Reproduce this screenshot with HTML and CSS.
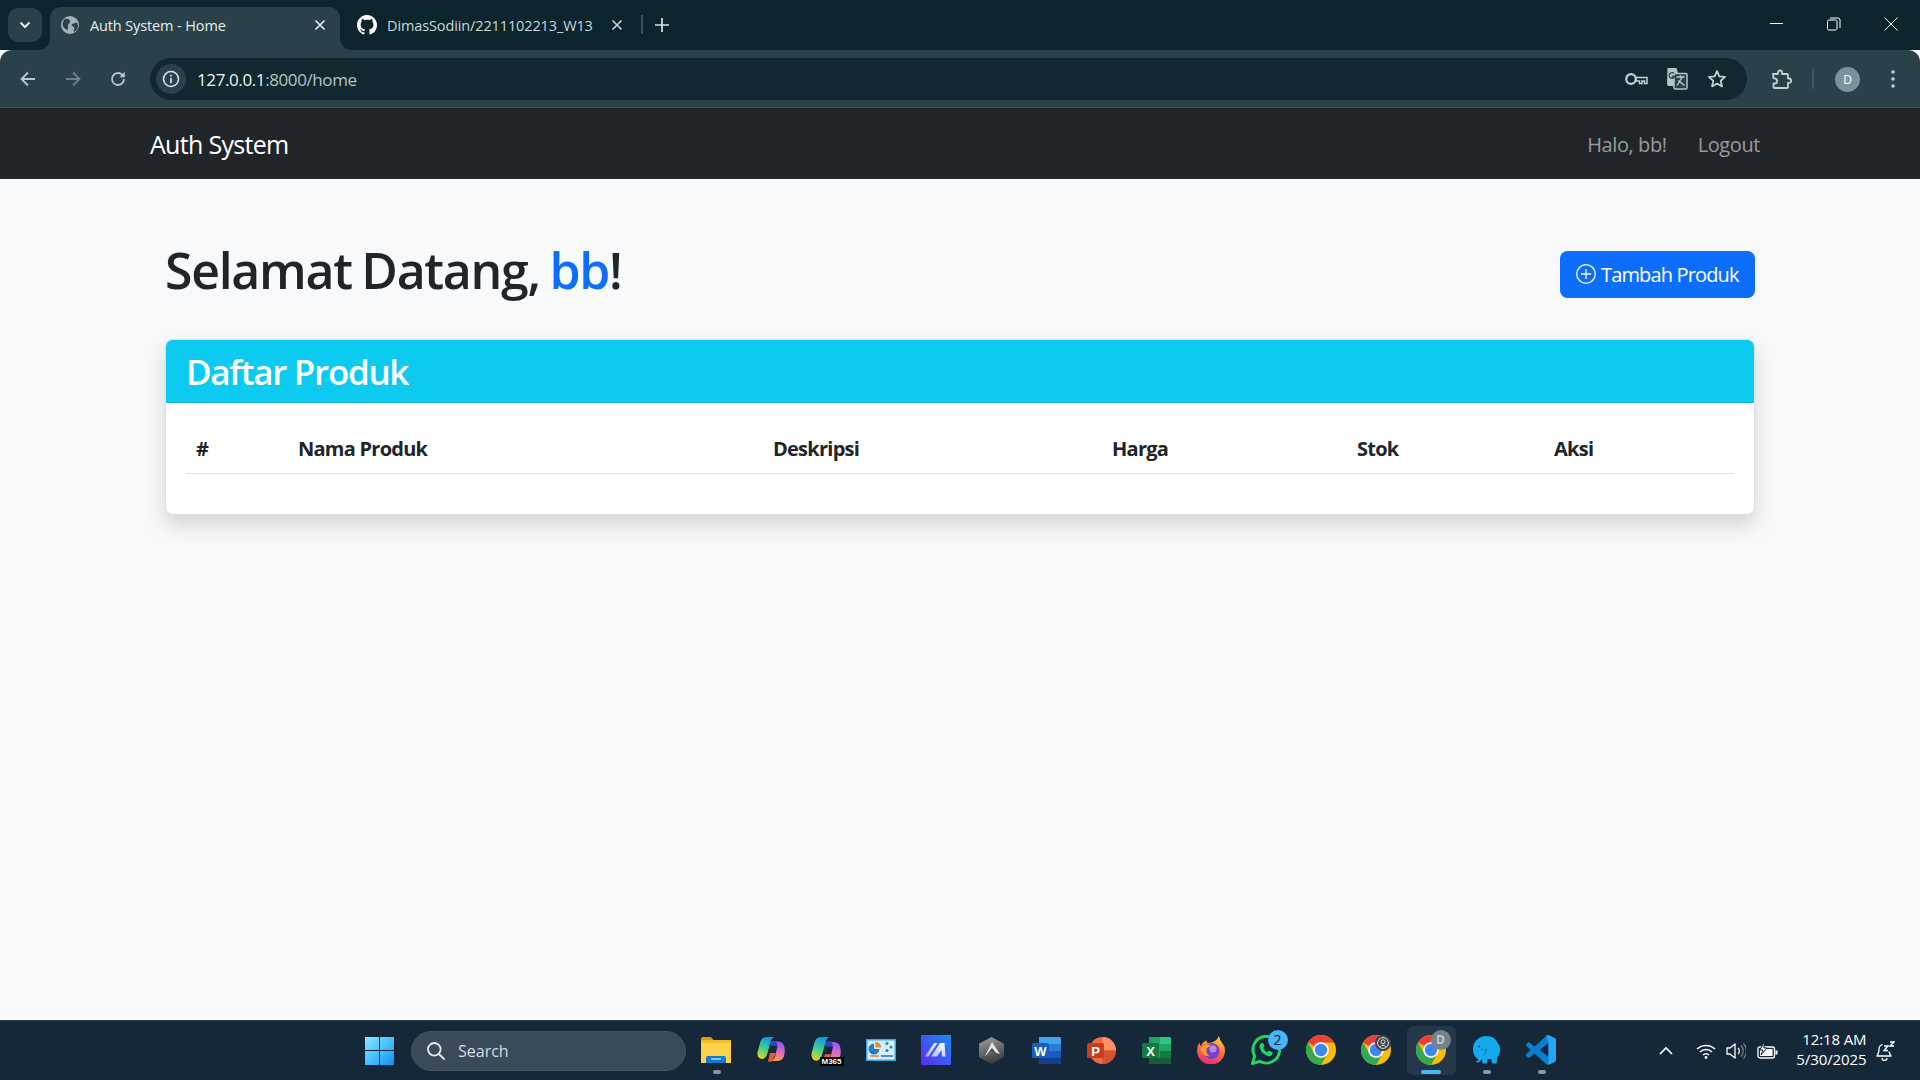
FILE: index.html
```html
<!DOCTYPE html>
<html lang="en">
<head>
<meta charset="utf-8">
<title>Auth System - Home</title>
<link rel="stylesheet" href="styles.css">
</head>
<body>
<header class="tabstrip">
  <div class="tab-search"><svg width="12" height="8" viewBox="0 0 12 8"><path d="M1.500 1.500 6 6l4.500-4.500" fill="none" stroke="#e4edef" stroke-width="2"/></svg></div>
  <div class="tab tab-active">
    <svg class="fav" width="18" height="18" viewBox="0 0 18 18"><circle cx="9" cy="9" r="9" fill="#a5b0b5"/><path d="M3 3.500q3-1.500 5 0 2 2 0 4-2 1.500-1 3.500.5 2-1 3-3.500-2-4.500-5 .5-3.500 1.500-5.500zM16 6.500q1.500 3 .5 6-2 3-3.500 3.500-1-2 .5-3.500l-1-2q-2.500-.5-1.500-2.500 2-1 5-1.500z" fill="#2a414a"/></svg>
    <span class="tab-title">Auth System - Home</span>
    <svg class="tab-x" width="12" height="12" viewBox="0 0 12 12"><path d="M1.500 1.500l9 9m0-9l-9 9" stroke="#e6eef0" stroke-width="1.600"/></svg>
  </div>
  <div class="tab tab-idle">
    <svg class="fav" width="20" height="20" viewBox="0 0 16 16"><path fill="#fff" d="M8 0C3.58 0 0 3.58 0 8c0 3.54 2.29 6.53 5.47 7.59.4.07.55-.17.55-.38 0-.19-.01-.82-.01-1.490-2.010.37-2.530-.49-2.690-.94-.09-.23-.48-.94-.82-1.130-.28-.15-.68-.52-.01-.53.63-.01 1.080.58 1.230.82.72 1.210 1.870.87 2.330.66.07-.52.28-.87.51-1.070-1.780-.2-3.640-.89-3.640-3.950 0-.87.31-1.590.82-2.150-.08-.2-.36-1.020.08-2.120 0 0 .67-.21 2.200.82.64-.18 1.320-.27 2-.27s1.360.09 2 .27c1.530-1.040 2.200-.82 2.200-.82.44 1.100.16 1.920.08 2.120.51.56.82 1.270.82 2.150 0 3.070-1.870 3.750-3.650 3.950.29.25.54.73.54 1.480 0 1.070-.01 1.930-.01 2.200 0 .21.15.46.55.38A8.010 8.010 0 0 0 16 8c0-4.420-3.580-8-8-8z"/></svg>
    <span class="tab-title tab-title-idle">DimasSodiin/2211102213_W13</span>
    <svg class="tab-x" width="12" height="12" viewBox="0 0 12 12"><path d="M1.500 1.500l9 9m0-9l-9 9" stroke="#c9d6da" stroke-width="1.600"/></svg>
  </div>
  <span class="tab-divider"></span>
  <svg class="tab-plus" width="14" height="14" viewBox="0 0 14 14"><path d="M7 0v14M0 7h14" stroke="#d5e2e6" stroke-width="1.700"/></svg>
  <div class="window-controls">
    <svg width="14" height="14" viewBox="0 0 14 14"><path d="M0 6.500h13" stroke="#fff" stroke-width="1"/></svg>
    <svg width="14" height="14" viewBox="0 0 14 14"><rect x=".5" y="3" width="9.500" height="10" rx="1.500" fill="none" stroke="#fff"/><path d="M3 1h8a2 2 0 0 1 2 2v8" fill="none" stroke="#fff"/></svg>
    <svg width="14" height="14" viewBox="0 0 14 14"><path d="M.5.5l13 13m0-13l-13 13" stroke="#fff"/></svg>
  </div>
</header>

<div class="toolbar">
  <div class="tool-btn"><svg width="18" height="18" viewBox="0 0 18 18"><path d="M16 9H3m6-6.500L2.500 9 9 15.500" fill="none" stroke="#b8c9ce" stroke-width="1.800"/></svg></div>
  <div class="tool-btn"><svg width="18" height="18" viewBox="0 0 18 18"><path d="M2 9h13M9 2.500 15.500 9 9 15.500" fill="none" stroke="#6f8087" stroke-width="1.800"/></svg></div>
  <div class="tool-btn"><svg width="18" height="18" viewBox="0 0 18 18"><path d="M15 9a6 6 0 1 1-1.800-4.300L15 6.500" fill="none" stroke="#b8c9ce" stroke-width="1.800"/><path d="M15.800 1.800v5.400h-5.400z" fill="#b8c9ce"/></svg></div>
  <div class="omnibox">
    <div class="site-info"><svg width="18" height="18" viewBox="0 0 18 18"><circle cx="9" cy="9" r="7.500" fill="none" stroke="#dbe5e8" stroke-width="1.600"/><path d="M9 8v5.200M9 4.800v1.800" stroke="#dbe5e8" stroke-width="1.700"/></svg></div>
    <span class="url">127.0.0.1<span class="url-dim">:8000/home</span></span>
    <div class="omni-icons">
      <svg class="omni-key" width="23" height="14" viewBox="0 0 23 14"><circle cx="6" cy="7" r="4.800" fill="none" stroke="#c3d0d4" stroke-width="2.200"/><path d="M11 5.500h11v6h-2.500V9H17v2.500h-2.500V9H11z" fill="none" stroke="#c3d0d4" stroke-width="1.500"/></svg>
      <svg width="22" height="22" viewBox="0 0 22 22"><path d="M1.500 0h9L16 18H3a2 2 0 0 1-2-2z" fill="#b6c3c8"/><rect x="8" y="5.500" width="13" height="15.500" rx="1.200" fill="#2a414a" stroke="#b6c3c8" stroke-width="1.500"/><path d="M10.500 9h8M14.500 7.500V9m-3.500 8.500 5-8m-3.500 3 6 5" stroke="#c3d0d4" stroke-width="1.300" fill="none"/><path d="M8 5.500a2.800 2.800 0 1 0 .6 3H5.800" fill="none" stroke="#2a414a" stroke-width="1.300"/></svg>
      <svg width="20" height="20" viewBox="0 0 20 20"><path d="M10 2l2.300 5.400 5.800.5-4.400 3.800 1.300 5.700L10 14.400l-5 3 1.300-5.700L1.900 7.900l5.800-.5z" fill="none" stroke="#c3d0d4" stroke-width="1.800" stroke-linejoin="round"/></svg>
    </div>
  </div>
  <div class="tool-ext"><svg width="21" height="21" viewBox="0 0 21 21"><path d="M2 5h5V3.500a2 2 0 0 1 4 0V5h5a1 1 0 0 1 1 1v3.500h1a2.200 2.200 0 0 1 0 4.400h-1V18a1 1 0 0 1-1 1H3.500a1 1 0 0 1-1-1v-3.500h1a2.600 2.600 0 0 0 0-5.200h-1z" fill="none" stroke="#c3d0d4" stroke-width="1.800" stroke-linejoin="round"/></svg></div>
  <span class="tool-divider"></span>
  <div class="avatar">D</div>
  <svg class="tool-menu" width="4" height="18" viewBox="0 0 4 18"><circle cx="2" cy="2" r="1.800" fill="#c3d0d4"/><circle cx="2" cy="9" r="1.800" fill="#c3d0d4"/><circle cx="2" cy="16" r="1.800" fill="#c3d0d4"/></svg>
</div>

<nav class="navbar">
  <a class="brand">Auth System</a>
  <div class="nav-links"><a>Halo, bb!</a><a>Logout</a></div>
</nav>

<main class="page">
  <div class="head-row">
    <h1>Selamat Datang, <span class="accent">bb</span>!</h1>
    <a class="btn-add"><svg width="20" height="20" viewBox="0 0 20 20"><circle cx="10" cy="10" r="9.300" fill="none" stroke="#fff" stroke-width="1.300"/><path d="M10 5v10M5 10h10" stroke="#fff" stroke-width="1.300"/></svg>Tambah Produk</a>
  </div>
  <section class="card">
    <div class="card-header"><h3>Daftar Produk</h3></div>
    <div class="card-body">
      <table>
        <thead>
          <tr>
            <th class="c-no">#</th>
            <th class="c-name">Nama Produk</th>
            <th class="c-desc">Deskripsi</th>
            <th class="c-price">Harga</th>
            <th class="c-stock">Stok</th>
            <th class="c-act">Aksi</th>
          </tr>
        </thead>
        <tbody></tbody>
      </table>
    </div>
  </section>
</main>

<footer class="taskbar">
  <div class="tb-item"><svg width="29" height="29" viewBox="0 0 29 29"><defs><linearGradient id="win" x1="0" y1="0" x2="1" y2="1"><stop offset="0" stop-color="#86ecff"/><stop offset="1" stop-color="#0c94f4"/></linearGradient></defs><path fill="url(#win)" d="M0 1h14v13H0zM15 1h14v13H15zM0 15h14v14H0zM15 15h14v14H15z"/></svg></div>
  <div class="tb-search"><svg width="20" height="20" viewBox="0 0 20 20"><circle cx="8.300" cy="8.300" r="6.300" fill="none" stroke="#e4e9ed" stroke-width="1.800"/><path d="M13 13l5.500 5.500" stroke="#e4e9ed" stroke-width="1.800"/></svg><span>Search</span></div>
  <div class="tb-item"><svg width="30" height="26" viewBox="0 0 30 26"><path d="M0 2a2 2 0 0 1 2-2h8l3 3.500H0z" fill="#d99a06"/><path d="M0 3h30v23H0z" fill="#fcd34a"/><path d="M0 3h30v3H0z" fill="#f4bd2c"/><path d="M5 26v-5a2 2 0 0 1 2-2h16a2 2 0 0 1 2 2v5z" fill="#0f78d4"/><path d="M10 22h10" stroke="#a9dcfb" stroke-width="1.500"/></svg><span class="dot"></span></div>
  <div class="tb-item"><svg width="28" height="26" viewBox="0 0 28 26"><use href="#copilot"/></svg></div>
  <div class="tb-item"><svg width="30" height="27" viewBox="0 0 28 25"><use href="#copilot"/></svg><span class="m365">M365</span></div>
  <div class="tb-item"><svg width="30" height="22" viewBox="0 0 30 22"><rect width="30" height="22" fill="#3ea6de"/><rect x="1.500" y="1.500" width="27" height="19" fill="#d4eefb"/><path d="M8 4.500a5.500 5.500 0 1 0 5.500 5.500H8z" fill="#2b79c2"/><path d="M9.500 2.800v5.700h5.700a5.700 5.700 0 0 0-5.700-5.700z" fill="#e78a2c"/><circle cx="21" cy="4.500" r="1.500" fill="#2b79c2"/><circle cx="25" cy="8" r="1.500" fill="#2b79c2"/><circle cx="21" cy="11.500" r="1.500" fill="#2b79c2"/><path d="M4 17h9" stroke="#e78a2c" stroke-width="1.600"/><path d="M15 17h12" stroke="#2b79c2" stroke-width="1.600"/></svg></div>
  <div class="tb-item"><svg width="30" height="30" viewBox="0 0 30 30"><defs><linearGradient id="mm" x1="1" y1="0" x2="0" y2="1"><stop offset="0" stop-color="#1a8cf5"/><stop offset="1" stop-color="#5a2cf0"/></linearGradient><linearGradient id="mmw" x1="0" y1="1" x2="1" y2="0"><stop offset="0" stop-color="#9fb0ff"/><stop offset="1" stop-color="#fff"/></linearGradient></defs><rect width="30" height="30" fill="url(#mm)"/><path d="M4 21.500 13 8h3.500L7.500 21.500zM10 21.500 19 8h4.500l1 13.500h-3.500L20.500 15 16 21.500z" fill="url(#mmw)"/></svg></div>
  <div class="tb-item"><svg width="25" height="27" viewBox="0 0 25 27"><defs><linearGradient id="hx" x1="0" y1="0" x2=".3" y2="1"><stop offset="0" stop-color="#a0a2a6"/><stop offset="1" stop-color="#3c3e42"/></linearGradient></defs><path d="M12.500 0 25 6.800v13.400L12.500 27 0 20.200V6.800z" fill="url(#hx)"/><path d="M13 5l8 12-9-3-6 5z" fill="#e2e3e5"/><path d="M13 11l4 5-5-1.800-4 2.800z" fill="#44464a"/></svg></div>
  <div class="tb-item"><svg width="29" height="27" viewBox="0 0 29 27"><path d="M7 0h20a2 2 0 0 1 2 2v23a2 2 0 0 1-2 2H9a2 2 0 0 1-2-2z" fill="#2b7cd3"/><path d="M7 0h20a2 2 0 0 1 2 2v5H7z" fill="#41a5ee"/><path d="M7 14h22v6.500H7z" fill="#185abd"/><path d="M7 20.500h22V25a2 2 0 0 1-2 2H9a2 2 0 0 1-2-2z" fill="#103f91"/><rect y="6" width="17" height="15" rx="1.500" fill="#1a5dc0"/><text x="8.500" y="18.500" class="ic-letter" text-anchor="middle">W</text></svg></div>
  <div class="tb-item"><svg width="29" height="27" viewBox="0 0 29 27"><circle cx="15.500" cy="13.500" r="13.500" fill="#ed6c47"/><path d="M15.500 0A13.500 13.500 0 0 1 29 13.500H15.500z" fill="#ff8f6b"/><path d="M15.500 13.500H29A13.500 13.500 0 0 1 15.500 27z" fill="#d35230"/><rect y="6" width="17" height="15" rx="1.500" fill="#c43e1c"/><text x="8.500" y="18.500" class="ic-letter" text-anchor="middle">P</text></svg></div>
  <div class="tb-item"><svg width="29" height="27" viewBox="0 0 29 27"><path d="M7 0h20a2 2 0 0 1 2 2v23a2 2 0 0 1-2 2H9a2 2 0 0 1-2-2z" fill="#21a366"/><path d="M18 0h9a2 2 0 0 1 2 2v5H18z" fill="#33c481"/><path d="M18 14h11v6.500H18z" fill="#107c41"/><path d="M7 20.500h22V25a2 2 0 0 1-2 2H9a2 2 0 0 1-2-2z" fill="#185c37"/><rect y="6" width="17" height="15" rx="1.500" fill="#107c41"/><text x="8.500" y="18.500" class="ic-letter" text-anchor="middle">X</text></svg></div>
  <div class="tb-item"><svg width="28" height="28" viewBox="0 0 28 28"><defs><linearGradient id="ff" x1=".7" y1="0" x2=".4" y2="1"><stop offset="0" stop-color="#ffd43a"/><stop offset=".45" stop-color="#ff7b2e"/><stop offset="1" stop-color="#f0267a"/></linearGradient></defs><path d="M22 0q.5 4 3.500 7.500 2.500 3 2.500 7a14 14 0 0 1-28 0q0-5 2.500-8 0 2.500 1.500 3.500 1.500-4.500 6-5.500-1 2 1 2.500 8 0 11-7z" fill="url(#ff)"/><circle cx="14.500" cy="15" r="8" fill="#7d3fc4"/><circle cx="16" cy="13" r="3.500" fill="#b58be8"/><path d="M3.500 13q5-6 11-4l-5 3.500q-1 5 3.500 8-7.500 0-9.500-7.500z" fill="#ff9a2e"/></svg></div>
  <div class="tb-item"><svg width="30" height="30" viewBox="0 0 31 31"><path d="M1.500 29.500l2.300-7.500A13.800 13.800 0 1 1 9 27.200z" fill="none" stroke="#25d366" stroke-width="3" stroke-linejoin="round"/><path d="M10.500 8.500q-2.500 1.500-1.500 5 2 6.500 9 8.500 3 .5 4-2l.5-2-4-2-1.500 1.800q-3-1-4.500-4.500l1.500-1.800-1.500-3.500z" fill="#25d366"/></svg><span class="badge badge-count">2</span></div>
  <div class="tb-item"><svg width="30" height="30" viewBox="0 0 30 30"><use href="#chrome-mark"/></svg></div>
  <div class="tb-item"><svg width="30" height="30" viewBox="0 0 30 30"><use href="#chrome-mark"/></svg><span class="badge badge-person"><svg width="12" height="12" viewBox="0 0 12 12"><circle cx="6" cy="6" r="5.400" fill="none" stroke="#e3e3e3"/><circle cx="6" cy="4.800" r="2" fill="none" stroke="#e3e3e3"/><path d="M2.800 9.800q3.200-3.200 6.400 0" fill="none" stroke="#e3e3e3"/></svg></span></div>
  <div class="tb-item tb-active"><svg class="tb-icon" width="30" height="30" viewBox="0 0 30 30"><use href="#chrome-mark"/></svg><span class="badge badge-profile">D</span><span class="dot dot-active"></span></div>
  <div class="tb-item"><svg width="27" height="28" viewBox="0 0 27 28"><path d="M13.500 0C20 0 23 3 24.500 7c1.500 1 2.500 3.500 2.500 7 0 4-1.500 6-2.500 7-.5 2-.5 4.500-1 6.500h-4.500l-.5-4.500h-4l-.5 4.500H9.500L9 23c-1 .5-1.500 2-2.500 3-2 1-4 .5-4-1.500.5 1 2.500 1 3-.5C4 22 0 20 0 13 0 6 5.500 0 13.500 0z" fill="#14a9ea"/><path d="M8 13q3 2 6 .5-1 5-4 6" fill="none" stroke="#0b7fbf" stroke-width="1"/><circle cx="6" cy="10.500" r=".9" fill="#0a3f5f"/></svg><span class="dot"></span></div>
  <div class="tb-item"><svg width="30" height="30" viewBox="0 0 100 100"><path fill-rule="evenodd" d="M70.900 99.300a6 6 0 0 0 4.600-.1l20.600-9.900a6.200 6.200 0 0 0 3.500-5.600V16.300a6.200 6.200 0 0 0-3.500-5.600L75.500.8a6.200 6.200 0 0 0-7 1.200L29 38 11.800 25a4.200 4.200 0 0 0-5.300.2L1 30.300a4.200 4.200 0 0 0 0 6.200L15.900 50 1 63.600a4.200 4.200 0 0 0 0 6.200l5.500 5a4.200 4.200 0 0 0 5.300.2L29 62l39.500 36zM75 27.300 45 50l30 22.700z" fill="#0a7fd2"/><path d="M75 100V27.300L68.500 2q3-2.500 7-1.200l20.600 9.900a6.200 6.200 0 0 1 3.900 5.600v67a6.200 6.200 0 0 1-3.900 6l-20.600 9.900z" fill="#25a6f0"/></svg><span class="dot"></span></div>
  <div class="tray">
    <svg class="tray-chev" width="14" height="9" viewBox="0 0 14 9"><path d="M1 8l6-6 6 6" fill="none" stroke="#fff" stroke-width="1.700"/></svg>
    <svg class="tray-wifi" width="20" height="16" viewBox="0 0 20 16"><path d="M1 6a13 13 0 0 1 18 0M4 9a8.500 8.500 0 0 1 12 0M7 12a4 4 0 0 1 6 0" fill="none" stroke="#fff" stroke-width="1.500"/><circle cx="10" cy="14.500" r="1.400" fill="#fff"/></svg>
    <svg class="tray-vol" width="20" height="18" viewBox="0 0 20 18"><path d="M1 6h3l5-4v14l-5-4H1z" fill="none" stroke="#fff" stroke-width="1.300" stroke-linejoin="round"/><path d="M12 6a4 4 0 0 1 0 6" fill="none" stroke="#fff" stroke-width="1.200"/><path d="M15 3.500a8 8 0 0 1 0 11M17.500 1.500a11 11 0 0 1 0 15" fill="none" stroke="#7c8894" stroke-width="1.100"/></svg>
    <svg class="tray-bat" width="21" height="18" viewBox="0 0 21 18"><rect x="1" y="5" width="16.500" height="11" rx="2" fill="none" stroke="#fff" stroke-width="1.300"/><rect x="18.500" y="8.500" width="2" height="4" fill="#fff"/><rect x="3" y="7" width="12.500" height="7" fill="#fff"/><path d="M7 0 3 8h3l-2 5 6-7H7z" fill="#fff" stroke="#15293b"/></svg>
    <div class="clock"><span>12:18 AM</span><span>5/30/2025</span></div>
    <svg class="tray-bell" width="19" height="20" viewBox="0 0 19 20"><path d="M6.500 3.500A5 5 0 0 0 3 8.500c0 4-2 6-2 6.500h14c0-.5-1.500-2-2-4.500" fill="none" stroke="#fff" stroke-width="1.300"/><path d="M6 17a2.500 2.500 0 0 0 5 0" fill="none" stroke="#fff" stroke-width="1.300"/><path d="M8 5h4l-4 4.500h4M14 1h4l-4 4h4" fill="none" stroke="#fff" stroke-width="1.300"/></svg>
  </div>
</footer>

<svg class="sprite" width="0" height="0">
  <defs>
    <linearGradient id="cp1" x1=".5" y1="0" x2=".2" y2="1"><stop offset="0" stop-color="#1496e8"/><stop offset=".5" stop-color="#3fd08f"/><stop offset="1" stop-color="#f4d01d"/></linearGradient>
    <linearGradient id="cp2" x1=".6" y1="0" x2=".4" y2="1"><stop offset="0" stop-color="#8a5cf0"/><stop offset=".55" stop-color="#e56bc0"/><stop offset="1" stop-color="#fb9c4a"/></linearGradient>
    <linearGradient id="cp3" x1="0" y1="0" x2="1" y2="0"><stop offset="0" stop-color="#0b67d8"/><stop offset="1" stop-color="#3f2fc0"/></linearGradient>
    <g id="copilot">
      <path d="M10 4h9l3 5h-7z" fill="url(#cp3)"/>
      <path d="M13 16h6l-4 8q-3 2-4 0z" fill="#f0563a"/>
      <path d="M9.500 0h8q-3 1-4 5l-3 11q-1 5-5 6H4.500Q0 21 .5 15.500L3 6Q4.500 0 9.500 0z" fill="url(#cp1)"/>
      <path d="M18.500 4.500h3q5 0 6 6 .5 3 0 6.500-1 7-7 7h-7q4-1 5-6l2-9q0-3-2-4.500z" fill="url(#cp2)"/>
    </g>
    <g id="chrome-mark">
      <circle cx="15" cy="15" r="15" fill="#fbbc04"/>
      <path d="M15 0a15 15 0 0 1 13 7.500H15a7.500 7.500 0 0 0-6.500 3.750L2 7.500A15 15 0 0 1 15 0z" fill="#ea4335"/>
      <path d="M2 7.500l6.500 11.250A7.500 7.500 0 0 0 21.500 18.750L15 30A15 15 0 0 1 2 7.500z" fill="#34a853"/>
      <circle cx="15" cy="15" r="7.800" fill="#fff"/>
      <circle cx="15" cy="15" r="6.200" fill="#4285f4"/>
    </g>
  </defs>
</svg>
</body>
</html>
```
FILE: styles.css
```css
* { box-sizing: border-box; }
html, body { margin: 0; height: 100%; }
body {
  display: flex;
  flex-direction: column;
  height: 100vh;
  overflow: hidden;
  font-family: "Open Sans", "Noto Sans", sans-serif;
  background: #f8f9fa;
  color: #212529;
}
svg { display: block; flex: none; }
.sprite { position: absolute; }

/* Browser tab strip */
.tabstrip {
  display: flex;
  align-items: flex-end;
  height: 50px;
  padding-left: 8px;
  background: #0c252c;
  flex: none;
}
.tab-search {
  display: flex;
  align-items: center;
  justify-content: center;
  width: 34px;
  height: 34px;
  margin-bottom: 8px;
  border-radius: 10px;
  background: #2a414a;
}
.tab {
  position: relative;
  display: flex;
  align-items: center;
  height: 43px;
  padding-bottom: 7px;
}
.tab-active {
  width: 290px;
  margin-left: 8px;
  padding-left: 11px;
  border-radius: 11px 11px 0 0;
  background: #2a414a;
}
.tab-active::before,
.tab-active::after {
  content: "";
  position: absolute;
  bottom: 0;
  width: 11px;
  height: 11px;
}
.tab-active::before {
  left: -11px;
  background: radial-gradient(circle at 0 0, transparent 10.500px, #2a414a 11px);
}
.tab-active::after {
  right: -11px;
  background: radial-gradient(circle at 100% 0, transparent 10.500px, #2a414a 11px);
}
.tab-idle {
  width: 291px;
  padding-left: 17px;
}
.tab-title {
  margin-left: 11px;
  width: 224px;
  font-size: 14.500px;
  color: #e4edef;
  white-space: nowrap;
  letter-spacing: -.12px;
}
.tab-title-idle { color: #c9d6da; margin-left: 10px; }
.tab-divider {
  width: 2px;
  height: 19px;
  margin: 0 0 16px 10px;
  background: #3b525a;
}
.tab-plus { margin: 0 0 18px 12px; }
.window-controls {
  display: flex;
  align-items: center;
  gap: 43px;
  margin-left: auto;
  margin-right: 22px;
  margin-bottom: 19px;
}

/* Browser toolbar */
.toolbar {
  position: relative;
  display: flex;
  align-items: center;
  height: 58px;
  padding: 1px 0 0 5px;
  background: #2a414a;
  border-bottom: 1px solid #454c50;
  border-radius: 12px 12px 0 0;
  flex: none;
}
.tool-btn {
  display: flex;
  align-items: center;
  justify-content: center;
  width: 45px;
}
.omnibox {
  display: flex;
  align-items: center;
  width: 1597px;
  height: 42px;
  margin-left: 10px;
  padding: 0 20px 0 6px;
  border-radius: 21px;
  background: #12272f;
}
.site-info {
  display: flex;
  align-items: center;
  justify-content: center;
  width: 30px;
  height: 30px;
  border-radius: 50%;
  background: #2a414a;
}
.url {
  margin-left: 11px;
  font-size: 17px;
  letter-spacing: -.4px;
  color: #eef4f5;
  white-space: nowrap;
}
.url-dim { color: #b5c3c8; }
.omni-icons {
  display: flex;
  align-items: center;
  gap: 19px;
  margin-left: auto;
}
.omni-key { margin-right: -1px; }
.tool-ext { margin-left: 24px; }
.tool-divider {
  width: 2px;
  height: 20px;
  margin-left: 20px;
  background: #3f565e;
}
.avatar {
  display: flex;
  align-items: center;
  justify-content: center;
  width: 25px;
  height: 25px;
  margin-left: 21px;
  border-radius: 50%;
  background: #7b929e;
  color: #fff;
  font-size: 12px;
}
.tool-menu { margin-left: 31px; }

/* Site navbar */
.navbar {
  display: flex;
  align-items: center;
  justify-content: space-between;
  height: 71px;
  padding: 0 160px 0 150px;
  background: #212529;
  flex: none;
}
.brand {
  font-size: 25px;
  letter-spacing: -.7px;
  color: #fff;
}
.nav-links {
  display: flex;
  gap: 31px;
  padding-top: 2px;
  font-size: 20px;
  letter-spacing: -.4px;
  color: rgba(255, 255, 255, .55);
}

/* Page */
.page {
  flex: 1;
  min-height: 0;
  padding: 60px 165px 0;
}
.head-row {
  display: flex;
  align-items: center;
  justify-content: space-between;
  margin-bottom: 30px;
}
h1 {
  margin: 0 0 10px;
  padding-top: 2px;
  font-size: 50px;
  font-weight: 600;
  line-height: 58px;
  letter-spacing: -1.300px;
  word-spacing: -2px;
}
.accent { color: #0d6efd; }
.btn-add {
  display: flex;
  align-items: center;
  gap: 5px;
  height: 47px;
  width: 195px;
  padding: 0 10px 0 16px;
  border-radius: 7.500px;
  background: #0d6efd;
  color: #fff;
  font-size: 20px;
  letter-spacing: -.85px;
  white-space: nowrap;
}
.card {
  overflow: hidden;
  border: 1px solid rgba(0, 0, 0, .125);
  border-radius: 7.500px;
  background: #fff;
  box-shadow: 0 10px 20px rgba(0, 0, 0, .15);
}
.card-header {
  height: 63px;
  padding: 11px 20px 9px;
  background: #0dcaf0;
  border-bottom: 1px solid rgba(0, 0, 0, .125);
  color: #fff;
}
h3 {
  margin: 0;
  font-size: 35px;
  font-weight: 600;
  line-height: 42px;
  letter-spacing: -1.300px;
}
.card-body { padding: 20px; }
table {
  width: 100%;
  table-layout: fixed;
  border-collapse: collapse;
  margin-bottom: 20px;
}
th {
  height: 50px;
  padding: 11px 10px 9px;
  text-align: left;
  font-size: 20px;
  font-weight: 700;
  line-height: 30px;
  letter-spacing: -.75px;
  color: #212529;
  border-bottom: 1px solid #dee2e6;
}
.c-no { width: 102px; }
.c-name { width: 475px; }
.c-desc { width: 339px; }
.c-price { width: 245px; }
.c-stock { width: 197px; }
.c-act { width: auto; }

/* Windows taskbar */
.taskbar {
  display: flex;
  align-items: center;
  height: 60px;
  padding-left: 352px;
  background: #14283a;
  border-top: 1px solid #2d3c49;
  flex: none;
}
.tb-item {
  position: relative;
  display: flex;
  align-items: center;
  justify-content: center;
  width: 55px;
  height: 49px;
  flex: none;
  margin-top: -1px;
}
.tb-search {
  display: flex;
  align-items: center;
  gap: 12px;
  width: 275px;
  height: 40px;
  margin: 0 2.500px 0 4px;
  padding-left: 14px;
  border: 1px solid #44535f;
  border-radius: 20px;
  background: #394a58;
  color: #d7dde2;
  font-size: 16px;
}
.dot {
  position: absolute;
  left: 24px;
  bottom: 1px;
  width: 8px;
  height: 4px;
  border-radius: 2px;
  background: #8b97a1;
}
.dot-active {
  left: 17px;
  width: 20px;
  background: #48b9f6;
}
.tb-active::before {
  content: "";
  position: absolute;
  inset: 0 3px;
  border-radius: 6px;
  background: #25384a;
}
.tb-icon { position: relative; }
.m365 {
  position: absolute;
  left: 21px;
  bottom: 9px;
  padding: 0 2px;
  background: #000;
  color: #fff;
  font-size: 8px;
  line-height: 9px;
  font-family: "Liberation Sans", sans-serif;
  font-weight: 700;
}
.ic-letter {
  font-family: "Liberation Sans", sans-serif;
  font-size: 13px;
  font-weight: 700;
  fill: #fff;
}
.badge {
  position: absolute;
  display: flex;
  align-items: center;
  justify-content: center;
  border-radius: 50%;
}
.badge-count {
  left: 29px;
  top: 4px;
  width: 20px;
  height: 20px;
  background: #45b7f5;
  color: #10202c;
  font-size: 14px;
}
.badge-person {
  left: 26px;
  top: 9px;
  width: 16px;
  height: 16px;
  background: #3f4347;
}
.badge-profile {
  left: 27px;
  top: 4px;
  width: 20px;
  height: 20px;
  background: #76838d;
  color: #c5cbd0;
  font-size: 12px;
  font-weight: 700;
}
.tray {
  display: flex;
  align-items: center;
  margin-left: 90px;
  color: #fff;
}
.tray-wifi { margin-left: 23px; }
.tray-vol { margin-left: 10px; }
.tray-bat { margin-left: 11px; }
.clock {
  display: flex;
  flex-direction: column;
  align-items: flex-end;
  width: 78px;
  margin-left: 11px;
  padding-bottom: 4px;
  font-size: 15px;
  line-height: 20px;
  letter-spacing: -.1px;
  white-space: nowrap;
}
.tray-bell { margin-left: 9px; }
```
